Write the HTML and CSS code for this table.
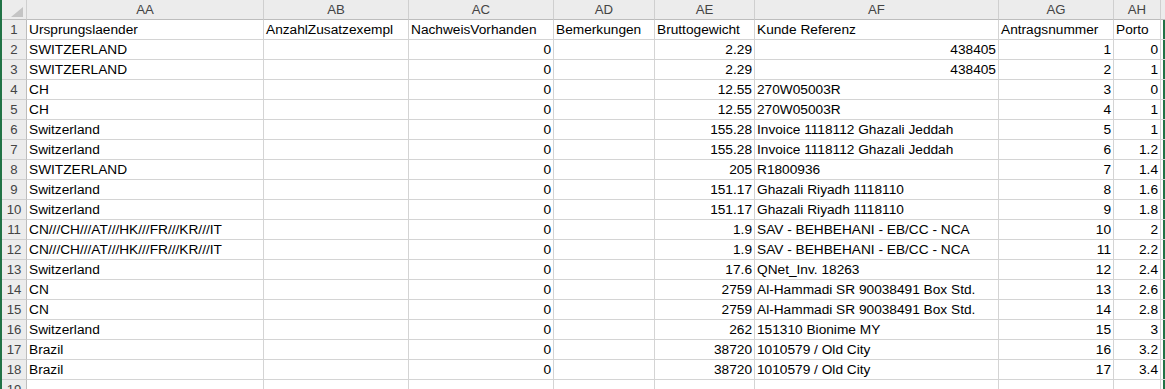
FILE: index.html
```html
<!DOCTYPE html>
<html>
<head>
<meta charset="utf-8">
<link rel="stylesheet" href="styles.css">
</head>
<body>
<div class="sheet">
  <div class="ch corner"><svg width="12" height="10" viewBox="0 0 12 10"><polygon points="12,0 12,10 0,10" fill="#c4c4c4"/></svg></div>
  <div class="ch">AA</div><div class="ch">AB</div><div class="ch">AC</div><div class="ch">AD</div><div class="ch">AE</div><div class="ch">AF</div><div class="ch">AG</div><div class="ch">AH</div><div class="ch"></div>

  <div class="rh">1</div><div class="c">Ursprungslaender</div><div class="c">AnzahlZusatzexempl</div><div class="c">NachweisVorhanden</div><div class="c">Bemerkungen</div><div class="c">Bruttogewicht</div><div class="c">Kunde Referenz</div><div class="c">Antragsnummer</div><div class="c">Porto</div><div class="c"></div>

  <div class="rh">2</div><div class="c">SWITZERLAND</div><div class="c"></div><div class="c n">0</div><div class="c"></div><div class="c n">2.29</div><div class="c n">438405</div><div class="c n">1</div><div class="c n">0</div><div class="c"></div>

  <div class="rh">3</div><div class="c">SWITZERLAND</div><div class="c"></div><div class="c n">0</div><div class="c"></div><div class="c n">2.29</div><div class="c n">438405</div><div class="c n">2</div><div class="c n">1</div><div class="c"></div>

  <div class="rh">4</div><div class="c">CH</div><div class="c"></div><div class="c n">0</div><div class="c"></div><div class="c n">12.55</div><div class="c">270W05003R</div><div class="c n">3</div><div class="c n">0</div><div class="c"></div>

  <div class="rh">5</div><div class="c">CH</div><div class="c"></div><div class="c n">0</div><div class="c"></div><div class="c n">12.55</div><div class="c">270W05003R</div><div class="c n">4</div><div class="c n">1</div><div class="c"></div>

  <div class="rh">6</div><div class="c">Switzerland</div><div class="c"></div><div class="c n">0</div><div class="c"></div><div class="c n">155.28</div><div class="c">Invoice 1118112 Ghazali Jeddah</div><div class="c n">5</div><div class="c n">1</div><div class="c"></div>

  <div class="rh">7</div><div class="c">Switzerland</div><div class="c"></div><div class="c n">0</div><div class="c"></div><div class="c n">155.28</div><div class="c">Invoice 1118112 Ghazali Jeddah</div><div class="c n">6</div><div class="c n">1.2</div><div class="c"></div>

  <div class="rh">8</div><div class="c">SWITZERLAND</div><div class="c"></div><div class="c n">0</div><div class="c"></div><div class="c n">205</div><div class="c">R1800936</div><div class="c n">7</div><div class="c n">1.4</div><div class="c"></div>

  <div class="rh">9</div><div class="c">Switzerland</div><div class="c"></div><div class="c n">0</div><div class="c"></div><div class="c n">151.17</div><div class="c">Ghazali Riyadh 1118110</div><div class="c n">8</div><div class="c n">1.6</div><div class="c"></div>

  <div class="rh">10</div><div class="c">Switzerland</div><div class="c"></div><div class="c n">0</div><div class="c"></div><div class="c n">151.17</div><div class="c">Ghazali Riyadh 1118110</div><div class="c n">9</div><div class="c n">1.8</div><div class="c"></div>

  <div class="rh">11</div><div class="c">CN///CH///AT///HK///FR///KR///IT</div><div class="c"></div><div class="c n">0</div><div class="c"></div><div class="c n">1.9</div><div class="c">SAV - BEHBEHANI - EB/CC - NCA</div><div class="c n">10</div><div class="c n">2</div><div class="c"></div>

  <div class="rh">12</div><div class="c">CN///CH///AT///HK///FR///KR///IT</div><div class="c"></div><div class="c n">0</div><div class="c"></div><div class="c n">1.9</div><div class="c">SAV - BEHBEHANI - EB/CC - NCA</div><div class="c n">11</div><div class="c n">2.2</div><div class="c"></div>

  <div class="rh">13</div><div class="c">Switzerland</div><div class="c"></div><div class="c n">0</div><div class="c"></div><div class="c n">17.6</div><div class="c">QNet_Inv. 18263</div><div class="c n">12</div><div class="c n">2.4</div><div class="c"></div>

  <div class="rh">14</div><div class="c">CN</div><div class="c"></div><div class="c n">0</div><div class="c"></div><div class="c n">2759</div><div class="c">Al-Hammadi SR 90038491 Box Std.</div><div class="c n">13</div><div class="c n">2.6</div><div class="c"></div>

  <div class="rh">15</div><div class="c">CN</div><div class="c"></div><div class="c n">0</div><div class="c"></div><div class="c n">2759</div><div class="c">Al-Hammadi SR 90038491 Box Std.</div><div class="c n">14</div><div class="c n">2.8</div><div class="c"></div>

  <div class="rh">16</div><div class="c">Switzerland</div><div class="c"></div><div class="c n">0</div><div class="c"></div><div class="c n">262</div><div class="c">151310 Bionime MY</div><div class="c n">15</div><div class="c n">3</div><div class="c"></div>

  <div class="rh">17</div><div class="c">Brazil</div><div class="c"></div><div class="c n">0</div><div class="c"></div><div class="c n">38720</div><div class="c">1010579 / Old City</div><div class="c n">16</div><div class="c n">3.2</div><div class="c"></div>

  <div class="rh">18</div><div class="c">Brazil</div><div class="c"></div><div class="c n">0</div><div class="c"></div><div class="c n">38720</div><div class="c">1010579 / Old City</div><div class="c n">17</div><div class="c n">3.4</div><div class="c"></div>

  <div class="rh">19</div><div class="c"></div><div class="c"></div><div class="c"></div><div class="c"></div><div class="c"></div><div class="c"></div><div class="c"></div><div class="c"></div><div class="c"></div>
</div>
</body>
</html>
```

FILE: styles.css
```css
html, body {
  margin: 0;
  padding: 0;
  background: #ffffff;
  overflow: hidden;
}
body {
  height: 389px;
  width: 1165px;
}
.sheet {
  display: grid;
  grid-template-columns: 25px 237px 145px 145px 101px 100px 244px 115px 47px 2px;
  grid-auto-rows: 20px;
  border-left: 2px solid #217346;
  border-right: 2px solid #217346;
  width: 1161px;
  font-family: "Liberation Sans", Arial, sans-serif;
  font-size: 13.7px;
  color: #000;
}
.sheet > div {
  box-sizing: border-box;
  border-right: 1px solid #d4d4d4;
  border-bottom: 1px solid #d4d4d4;
  white-space: nowrap;
  line-height: 18px;
  padding: 1px 2px 0 2px;
  overflow: visible;
}
.ch {
  background: #ececec;
  color: #444;
  text-align: center;
  border-right-color: #cfcfcf !important;
  border-bottom-color: #bdbdbd !important;
  font-size: 13.2px;
}
.corner {
  display: flex;
  align-items: flex-end;
  justify-content: flex-end;
  padding: 0 3px 2px 0 !important;
}
.rh {
  background: #ececec;
  color: #444;
  text-align: center;
  border-right-color: #bdbdbd !important;
  border-bottom-color: #cfcfcf !important;
  font-size: 13.2px;
  padding: 1px 0 0 0 !important;
}
.n {
  text-align: right;
}
```
